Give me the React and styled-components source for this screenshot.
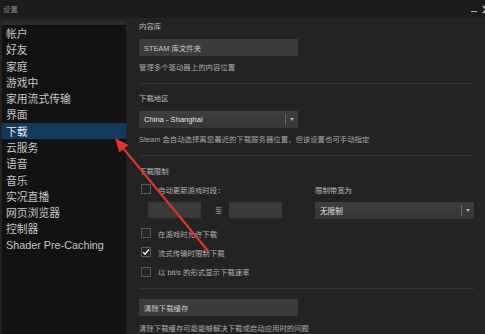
import React from 'react';
import styled, { createGlobalStyle } from 'styled-components';

const Global = createGlobalStyle`
  html, body { margin: 0; padding: 0; background: #232323; }
  body {
    width: 485px; height: 334px; overflow: hidden;
    font-family: "Liberation Sans", "Noto Sans CJK SC", sans-serif;
  }
`;

const Window = styled.div`
  position: relative;
  width: 485px;
  height: 334px;
  display: flex;
  flex-direction: column;
  background: #232323;
  overflow: hidden;
`;

const TitleBar = styled.div`
  height: 18px;
  flex: none;
  background: #1b1b1b;
  display: flex;
  align-items: center;
  justify-content: space-between;
  padding-left: 3px;
  box-sizing: border-box;
  overflow: hidden;
`;

const Title = styled.span`
  font-size: 7.4px;
  line-height: 10px;
  color: #8a8a8a;
  margin-top: 2px;
`;

const Controls = styled.div`
  display: flex;
  align-items: center;
  gap: 5px;
  margin-right: -6px;
`;

const MinBtn = styled.span`
  width: 6px;
  height: 1.5px;
  background: #b4b4b4;
  margin-top: 5px;
`;

const Body = styled.div`
  flex: 1;
  display: flex;
  min-height: 0;
`;

const Sidebar = styled.nav`
  width: 124px;
  flex: none;
  margin-left: 2px;
  margin-top: 3px;
  border-top: 4px solid #2c2c2c;
  background: #121212;
  display: flex;
  flex-direction: column;
`;

const NavItem = styled.div`
  height: 16.28px;
  flex: none;
  display: flex;
  align-items: center;
  padding-left: 4px;
  font-size: 10.8px;
  white-space: nowrap;
  color: ${p => (p.$active ? '#e8e8e8' : '#c6c6c6')};
  background: ${p => (p.$active ? '#123a5c' : 'transparent')};
`;

const Content = styled.main`
  flex: 1;
  display: flex;
  flex-direction: column;
  padding: 4px 11px 0 13px;
  min-width: 0;
`;

const Text = styled.div`
  font-size: 7.4px;
  line-height: 10px;
  height: 10px;
  white-space: nowrap;
  margin-top: ${p => p.$mt || 0}px;
  color: ${p => (p.$label ? '#bcbcbc' : '#a8a8a8')};
`;

const ActionButton = styled.div`
  width: 159px;
  height: 17px;
  box-sizing: border-box;
  background: #3b3b3b;
  display: flex;
  align-items: center;
  padding-left: 5px;
  font-size: 7.4px;
  color: #c8c8c8;
  margin-top: ${p => p.$mt || 0}px;
`;

const Divider = styled.div`
  height: 1px;
  background: #343434;
  margin-top: ${p => p.$mt || 0}px;
`;

const SelectBox = styled.div`
  position: relative;
  width: ${p => p.$w}px;
  height: 17px;
  box-sizing: border-box;
  background: linear-gradient(#3e3e3e, #363636);
  display: flex;
  align-items: center;
  padding-left: 5px;
  font-size: 7.6px;
  color: #e4e4e4;
  margin-top: ${p => p.$mt || 0}px;
`;

const SelectValue = styled.span`
  flex: 1;
`;

const SelectSep = styled.span`
  width: 1px;
  height: 11px;
  background: #6a6a6a;
  margin-right: 4px;
`;

const Caret = styled.span`
  width: 0;
  height: 0;
  border-left: 2.5px solid transparent;
  border-right: 2.5px solid transparent;
  border-top: 3px solid #b8b8b8;
  margin-right: 4px;
`;

const LimitGrid = styled.div`
  display: grid;
  grid-template-columns: 176px 159px;
  margin-top: 7.5px;
`;

const Column = styled.div`
  display: flex;
  flex-direction: column;
`;

const CheckRow = styled.div`
  display: flex;
  align-items: center;
  gap: 7px;
  height: 10px;
  margin-left: 2px;
  margin-top: ${p => p.$mt || 0}px;
  font-size: 7.4px;
  color: #b2b2b2;
  white-space: nowrap;
`;

const Box = styled.span`
  width: 10px;
  height: 10px;
  flex: none;
  box-sizing: border-box;
  border: 1px solid #5a5a5a;
  background: #262626;
  display: flex;
  align-items: center;
  justify-content: center;
`;

const InputRow = styled.div`
  display: flex;
  align-items: center;
  margin-left: 9px;
  margin-top: 8px;
  height: 16px;
`;

const Field = styled.div`
  width: 53px;
  height: 16px;
  background: #3a3a3a;
`;

const To = styled.span`
  font-size: 7.2px;
  color: #a8a8a8;
  margin: 0 7px 0 14px;
`;

const Overlay = styled.svg`
  position: absolute;
  inset: 0;
  pointer-events: none;
`;

const Checkbox = ({ checked, label, mt }) => (
  <CheckRow $mt={mt}>
    <Box>
      {checked && (
        <svg width="8" height="8" viewBox="0 0 8 8">
          <polyline points="1.2,4.2 3.1,6.2 6.9,1.6" fill="none" stroke="#f0f0f0" strokeWidth="1.5" />
        </svg>
      )}
    </Box>
    <span>{label}</span>
  </CheckRow>
);

const Select = ({ value, w, mt }) => (
  <SelectBox $w={w} $mt={mt}>
    <SelectValue>{value}</SelectValue>
    <SelectSep />
    <Caret />
  </SelectBox>
);

const navItems = [
  '帐户', '好友', '家庭', '游戏中', '家用流式传输', '界面', '下载', '云服务',
  '语音', '音乐', '实况直播', '网页浏览器', '控制器', 'Shader Pre-Caching',
];

export default function App() {
  return (
    <>
      <Global />
      <Window>
        <TitleBar>
          <Title>设置</Title>
          <Controls>
            <MinBtn />
            <svg width="9" height="9" viewBox="0 0 9 9">
              <path d="M1 1 L8 8 M8 1 L1 8" stroke="#bdbdbd" strokeWidth="1.6" />
            </svg>
          </Controls>
        </TitleBar>
        <Body>
          <Sidebar>
            {navItems.map(n => (
              <NavItem key={n} $active={n === '下载'}>{n}</NavItem>
            ))}
          </Sidebar>
          <Content>
            <Text $label>内容库</Text>
            <ActionButton $mt={7}>STEAM 库文件夹</ActionButton>
            <Text $mt={7}>管理多个驱动器上的内容位置</Text>
            <Divider $mt={10} />
            <Text $label $mt={10.5}>下载地区</Text>
            <Select value="China - Shanghai" w={159} mt={6.5} />
            <Text $mt={7.5}>Steam 会自动选择离您最近的下载服务器位置，但该设置也可手动指定</Text>
            <Divider $mt={9.5} />
            <Text $label $mt={11}>下载限制</Text>
            <LimitGrid>
              <Column>
                <Checkbox label="自动更新游戏时段：" />
                <InputRow>
                  <Field />
                  <To>至</To>
                  <Field />
                </InputRow>
              </Column>
              <Column>
                <Text $label $mt={2}>限制带宽为</Text>
                <Select value="无限制" w={159} mt={6} />
              </Column>
            </LimitGrid>
            <Checkbox mt={9} label="在游戏时允许下载" />
            <Checkbox mt={9} checked label="流式传输时限制下载" />
            <Checkbox mt={9.5} label="以 bit/s 的形式显示下载速率" />
            <Divider $mt={11.5} />
            <ActionButton $mt={10}>清除下载缓存</ActionButton>
            <Text $mt={8}>清除下载缓存可能能够解决下载或启动应用时的问题</Text>
          </Content>
        </Body>
        <Overlay width="485" height="334" viewBox="0 0 485 334">
          <line x1="208" y1="251" x2="123" y2="148" stroke="#e5322b" strokeWidth="2" />
          <polygon points="115,138 128.5,145 119.3,152.6" fill="#e5322b" />
        </Overlay>
      </Window>
    </>
  );
}
